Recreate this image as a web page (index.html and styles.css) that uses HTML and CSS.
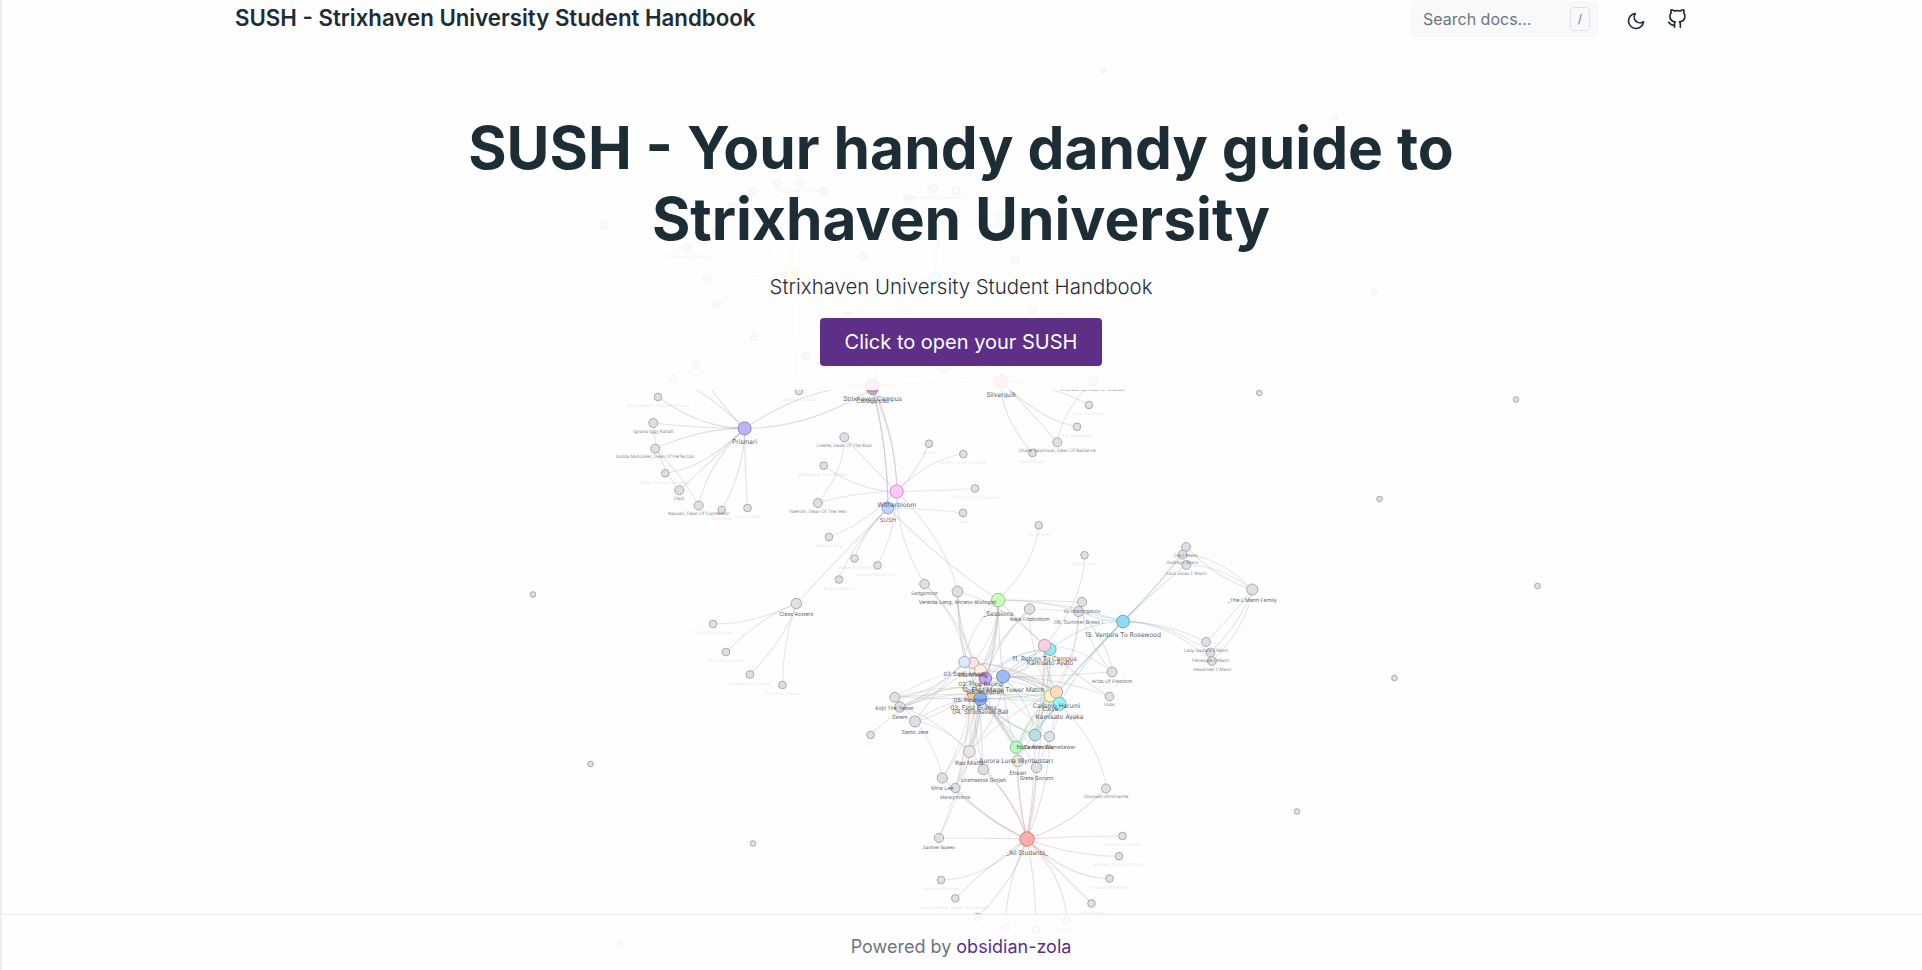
FILE: index.html
```html
<!DOCTYPE html>
<html lang="en">
<head>
<meta charset="utf-8">
<title>SUSH - Strixhaven University Student Handbook</title>
<link rel="stylesheet" href="styles.css">
</head>
<body>
<svg class="graph" id="graph" width="1922" height="970" viewBox="0 0 1922 970" aria-hidden="true"></svg>
<div class="page">
  <div class="top">
    <header class="navbar">
      <a class="brand">SUSH - Strixhaven University Student Handbook</a>
      <div class="tools">
        <div class="search"><span>Search docs...</span><kbd>/</kbd></div>
        <svg class="icon moon" viewBox="0 0 24 24"><path d="M21 12.79A9 9 0 1 1 11.21 3 7 7 0 0 0 21 12.79z"/></svg>
        <svg class="icon" viewBox="0 0 24 24"><path d="M9 19c-5 1.5-5-2.5-7-3m14 6v-3.87a3.37 3.37 0 0 0-.94-2.61c3.14-.35 6.44-1.54 6.44-7A5.44 5.44 0 0 0 20 4.77 5.07 5.07 0 0 0 19.91 1S18.73.65 16 2.48a13.38 13.38 0 0 0-7 0C6.27.65 5.09 1 5.09 1A5.07 5.07 0 0 0 5 4.77a5.44 5.44 0 0 0-1.5 3.78c0 5.42 3.3 6.61 6.44 7A3.37 3.37 0 0 0 9 18.13V22"/></svg>
      </div>
    </header>
    <main class="hero">
      <h1>SUSH - Your handy dandy guide to<br>Strixhaven University</h1>
      <p class="lead">Strixhaven University Student Handbook</p>
      <a class="button">Click to open your SUSH</a>
    </main>
  </div>
  <footer class="footer">Powered by&nbsp;<a>obsidian-zola</a></footer>
</div>
<script src="graph.js"></script>
</body>
</html>
```
FILE: styles.css
```css
* { box-sizing: border-box; }
body { margin: 0; background: #fefefe; color: #1d2d35; font-family: Inter, sans-serif; }
.page { position: relative; height: 970px; display: flex; flex-direction: column; justify-content: space-between; border-left: 2px solid #eeeeef; overflow: hidden; }
.graph { position: absolute; left: 0; top: 0; }
.top { height: 390px; padding-right: 2px; background: rgba(254,254,254,.86); }
.navbar { height: 37px; padding: 1px 233px 0 233px; display: flex; justify-content: space-between; align-items: flex-start; }
.brand { font-size: 22.25px; font-weight: 600; line-height: 34px; white-space: nowrap; }
.tools { display: flex; align-items: center; }
.search { width: 188px; height: 36px; padding: 0 9px 0 12px; margin-right: 27px; border-radius: 4px; background: #f8f9fa; color: #6c757d; font-size: 16px; display: flex; align-items: center; justify-content: space-between; }
kbd { width: 20px; height: 24px; border: 1px solid #dee2e6; border-radius: 4px; font: 12px/22px Inter, sans-serif; text-align: center; }
.icon { width: 20px; height: 20px; fill: none; stroke: #1d2d35; stroke-width: 2; stroke-linecap: round; stroke-linejoin: round; }
.moon { margin-right: 21px; margin-top: 3px; }
.hero { padding-top: 75px; display: flex; flex-direction: column; align-items: center; }
h1 { margin: 0; font-size: 58.65px; font-weight: 700; line-height: 71px; text-align: center; white-space: nowrap; }
.lead { margin: 17px 0 15px; font-size: 20.4px; font-weight: 300; line-height: 32px; }
.button { width: 282px; height: 48px; border-radius: 4px; background: #5d2f86; color: #fff; font-size: 20px; line-height: 48px; text-align: center; }
.footer { height: 56px; padding: 8px 2px 0 0; border-top: 1px solid #e9ecef; background: rgba(254,254,254,.86); display: flex; justify-content: center; align-items: center; font-size: 18px; color: #6c757d; }
.footer a { color: #5d2f86; }
.graph text { font-family: Inter, sans-serif; text-anchor: middle; dominant-baseline: central; fill: #343434; text-rendering: geometricPrecision; }
.graph path { fill: none; stroke-width: 1.1; }
```
FILE: graph.js
```js
const G = '#dde1e6';
const nodes = {}, order = [];
// id, x, y, radius, fill, label, optional label opacity
function n(id, x, y, r, fill, label, op) { nodes[id] = { x, y, r, fill: fill || G, label, op }; order.push(nodes[id]); }
const links = [];
// connect every source id to every target id
function e(from, to) { from.split(' ').forEach(a => to.split(' ').forEach(b => links.push([a, b]))); }

[[1259.3,393],[1516,399.5],[1379.5,499],[1537.5,586],[1394.5,678],[1297,811.5],[533,594.5],[590.5,764],[753,843.5],[1103.5,71],[1335,117.5],[1374,292],[620,944]].forEach((p, i) => n('iso' + i, p[0], p[1], 2.8, G, ''));

n('lor', 791.5, 274.5, 6.5, '#ffff9e', 'Lorehold');
n('l1', 604.7, 225, 3.8, G, 'Quintorius Kand');
n('l2', 686.7, 248, 4.4, G, 'Lianna Flametongue', .55);
n('l3', 706.5, 279, 3.8, G, 'Fortress');
n('l4', 716.5, 304.7, 3.8, G, 'Kollema Hall');
n('l5', 754, 337, 3.8, G, 'Pillardrop Grounds');
n('l6', 716, 233, 3.8, G, 'Dig Site');
n('l7', 732.5, 207, 4.4, G, 'Augusta, Dean Of Order', .5);
n('l8', 753, 191.5, 3.8, G, 'Asterion');
n('l9', 777, 183, 3.8, G, '');
n('l10', 800, 182.7, 4.5, G, 'Plargg, Dean Of Chaos', .55);
n('l11', 824, 191.5, 3.8, G, 'Reconstructor');
n('l12', 863, 256.5, 3.8, G, 'Hofri Ghost');
n('qua', 935, 279, 6.5, '#9efff0', '');
n('q1', 932.5, 189, 4.5, G, 'Kianne, Dean Of Substance', .55);
n('q2', 956, 190.5, 3.8, G, '');
n('q3', 909.5, 198.5, 3.8, G, '');
n('q4', 999.5, 215.3, 4.5, G, 'Imbraham, Dean Of Theory', .45);
n('q5', 1015, 236, 3.8, G, 'Torus Hall');
n('q6', 1015, 260.7, 3.8, G, 'Zimone');
n('q7', 848, 316, 3.8, G, '');
n('s1', 1032.5, 310, 3.8, G, 'Scrollhall');
n('s2', 1059.5, 316.5, 3.8, G, '');
n('s3', 944, 369, 3.8, G, 'Mavinda Sharpbeak');
n('p1', 696, 364.5, 3.8, G, 'Furygale');
n('p2', 673, 378, 3.8, G, 'Rootha, Mercurial Artist');
n('c1', 805.5, 356, 3.8, G, 'Sunken Bowl');
n('lc', 799, 391, 3.8, G, 'Lorehold Campus');

n('arl', 658, 397, 3.8, G, 'Arlin Mensorn, Poppy Instructor');
n('ign', 653.3, 423, 4.5, G, 'Ignaria Iggy Kahafi');
n('uvi', 655.2, 448.7, 4.5, G, 'Uvilda Mistcoiler, Dean Of Perfection');
n('zaf', 665.2, 473.3, 3.8, G, 'Zaffai, Thunder Conductor');
n('zep', 679.3, 490.3, 4.5, G, 'Zeph');
n('nas', 698.7, 505.5, 4.5, G, 'Nassari, Dean Of Expression');
n('opu', 721.7, 510, 3.8, G, 'Opus Walk');
n('con', 747.5, 508, 3.8, G, 'Conjurot Hall');
n('pri', 744.6, 428.4, 6.5, '#bdb2ff', 'Prismari');

n('col', 872.5, 389, 5.6, '#c4b4bc', 'College List');
n('cam', 872.5, 385.3, 6.5, '#f5a5e0', 'Strixhaven Campus');
n('sil', 1001, 381.5, 6.5, '#ffadad', 'Silverquill');
n('emb', 1092.5, 381.3, 4.4, G, 'Embrose Lu, Dean Of Shadow');
n('pam', 1089, 405, 3.8, G, 'Pam, The Broker');
n('dra', 1077, 426.7, 3.8, G, 'The Dramarium');
n('sha', 1057.3, 442.3, 4.5, G, 'Shaile Talonrook, Dean Of Radiance');
n('dun', 1032.5, 453, 3.8, G, 'Dunsklift Hall');

n('lis', 844.3, 437.3, 4.5, G, 'Lisette, Dean Of The Root');
n('wil', 823.7, 465.7, 3.8, G, 'Willowdusk, Essence Seer');
n('val', 817.8, 503, 4.5, G, 'Valentin, Dean Of The Vein');
n('det', 829, 537, 3.8, G, 'Detention Bog');
n('wid', 854.5, 558.5, 3.8, G, 'Widdershins Hall');
n('dyo', 877.5, 565.5, 3.8, G, 'Dyome, Master Chef');
n('ext', 839, 579.5, 3.8, G, 'Extracurriculars');
n('qrn', 929, 443.7, 3.8, G, 'Quarns');
n('ver', 963.3, 454, 3.8, G, 'Verdira, Grass Gardener');
n('thr', 975, 488.5, 3.8, G, 'Thrash, Ghost Swimmer');
n('jub', 963, 513, 3.8, G, 'Jubo');
n('sus', 888, 508, 5.9, '#c4d4ff', 'SUSH', .72);
n('wit', 896.7, 491.5, 6.5, '#ffc6ff', 'Witherbloom');

n('cla', 796.3, 603.5, 5.2, G, 'Class Rosters');
n('y4', 713, 624, 3.8, G, 'Fourth Year Classes');
n('y3', 726, 652, 3.8, G, 'Third Year Classes');
n('y2', 750, 674.5, 3.8, G, 'Second Year Classes');
n('y1', 782.5, 685, 3.8, G, 'First Year Classes');
n('fes', 1038.7, 525.3, 3.8, G, 'SS. Festival');
n('mag', 1084.5, 555.2, 3.8, G, 'Mage Tower');
n('sed', 924.5, 584, 4.7, G, 'Sedgemoor', .72);
n('vrl', 957.5, 591.5, 5.4, G, 'Verelda Lang, Arcano-Biologist');
n('ses', 998.3, 600, 6.7, '#caffbf', '_Sessions');
n('ala', 1029.5, 609, 5.2, G, 'Alaia Fitzbottom');
n('s09', 1078.5, 611.5, 5, G, '09. Summer Break I', .65);
n('s10', 1082, 602, 4.7, G, '10. Interrogation', .7);
n('s13', 1123, 621.5, 6.4, '#90dbf4', '13. Venture To Rosewood');
n('dal', 1186, 547, 4.4, G, "Dal L'Mann");
n('aud', 1182.5, 554.7, 4.4, G, "Audrey L'Mann");
n('jul', 1186.3, 565, 4.4, G, "Lord Julian L'Mann");
n('fam', 1252.3, 589.5, 5.5, G, "_The L'Mann Family");
n('isa', 1206, 642, 4.4, G, "Lady Isadora L'Mann");
n('alx', 1212, 661, 4.4, G, "Alexander L'Mann");
n('pen', 1210.5, 652.5, 4.4, G, "Penelope L'Mann");

n('ayt', 1050, 649.3, 6.1, '#8eecf5', 'Kamisato Ayato');
n('s11', 1044.5, 645.5, 6.1, '#fbd0e0', '11. Return To Campus');
n('s06', 973, 663, 5.7, '#fde2e4', '06. Mining');
n('s07', 964.5, 662, 5.7, '#dfe7fd', '07. Sedgemoor');
n('s02', 980.5, 670.5, 6, '#fff1e6', '02. Frog Racing');
n('s08', 985.5, 678.3, 6.2, '#c3a7ed', '08. Initiation');
n('s12', 1003, 676.5, 6.5, '#9dbcf3', '12. First Mage Tower Match');
n('s03', 973.5, 694, 6.2, '#ffc98a', '03. First Exams');
n('s05', 970, 687, 6, '#eeeeea', '05. Reunion');
n('s04', 980.3, 698.8, 6.5, '#8fb3fb', '04. Strixhaven Ball');
n('cai', 1050.3, 696, 6, '#fdf8c0', 'Caiya');
n('har', 1056.5, 692, 6.1, '#ffdbc4', 'Calismo Harumi');
n('ayk', 1059.5, 703.8, 6.5, '#98f5ff', 'Kamisato Ayaka');
n('ari', 1112, 672, 4.9, G, 'Ariza Of Freedom', .7);
n('vid', 1109.5, 696.5, 4.4, G, 'Vidar');
n('koj', 894.7, 697.3, 5, G, 'Kojii The Tamer');
n('sal', 900, 707, 5.2, G, 'Salem');
n('sam', 915, 721.5, 5.5, G, 'Samo Jere');
n('tx', 870.5, 735, 3.8, G, 'TX');
n('cad', 1049.5, 736.5, 5.1, G, 'Cadoras Damellawar');
n('nor', 1035, 735, 5.9, '#badfe3', 'Nora Ann Wu');
n('aur', 1016.3, 747.3, 6.1, '#b9fbc0', 'Aurora Luna Wynterstarr');
n('ehs', 1017.8, 761, 5.7, '#e2ece9', 'Ehsan');
n('gre', 1036.5, 767.5, 5.2, G, 'Greta Gorunn');
n('rae', 969.3, 751.5, 5.9, '#ebe4ea', 'Rae Mistle');
n('urz', 983.5, 769.5, 5.2, G, 'Urzmaktok Grojah');
n('min', 942.3, 778, 5.1, G, 'Mina Lee', .7);
n('mel', 955.3, 788, 4.7, G, 'Melwythorne', .7);
n('shu', 1106, 788.5, 4.5, G, 'Shuvadri Glintmantle');
n('zan', 939, 838, 4.6, G, 'Zanther Bowen');
n('a1', 941, 880, 3.8, G, 'Jasmeen Binsklaw');
n('a2', 955.3, 898.3, 3.8, G, 'Rosimyffenbip "Rosie" Wuzfeddlims');
n('a3', 977.5, 917, 3.8, G, 'Cadogan T. Wilford');
n('a4', 1005.5, 928.3, 3.8, G, 'Tilana Kapule');
n('a5', 1036, 930, 3.8, G, 'Quentillius');
n('a6', 1066.5, 921, 3.8, G, 'Javenesh Stoutclaw');
n('a7', 1091.5, 903.5, 3.8, G, 'Larine Arneau');
n('a8', 1109.5, 878.5, 3.8, G, 'Grayson Wildemere');
n('a9', 1119, 856.2, 3.8, G, 'Bhedum "Rampart" Sooqij');
n('a10', 1122.5, 836, 3.8, G, 'Drazhomir Yarnask');
n('all', 1027, 839, 7.2, '#ffadad', '_All Students_');

e('lor', 'l1 l2 l3 l4 l5 l6 l7 l8 l9 l10 l11 l12 cam lc');
e('l7', 'l10'); e('q1', 'q4');
e('qua', 'q1 q2 q3 q4 q5 q6 q7 cam c1');
e('sil', 's1 s2 s3 emb pam dra sha dun cam'); e('emb', 'sha');
e('pri', 'arl ign uvi zaf zep nas opu con p1 p2 col'); e('cam', 'pri lc');
e('ign', 'zep'); e('uvi', 'nas');
e('wit', 'lis wil val det dyo qrn ver thr sed vrl cam col'); e('lis', 'val');
e('sus', 'jub wid ext cla cam col ses');
e('y4 y3 y2 y1', 'cla');
e('ses', 'fes s10 s09 s13 s11 s02 s03 s04 s05 s06 s07 s08 s12');
e('mag', 's11');
e('s13', 'dal aud jul isa pen alx ayt ayk har s09 aur');
e('dal aud jul isa pen alx', 'fam');
e('vrl', 's07 s06 s02 s04'); e('sed', 's07 s06'); e('ala', 's13 s08 s05 cai');
e('s09', 'ari cai har'); e('s10', 'ari');
e('s11', 'ari vid ayk cai har nor vrl s12 all'); e('ayt', 's12 s08 s05 cai nor');
e('s12', 'ari vid ayk har ayt aur nor rae s04');
e('s07', 'koj sal sam har'); e('s06', 'har sal cai');
e('s05', 'koj sal tx rae ayk'); e('s08', 'sam cai aur');
e('s04', 'sam ayk koj har rae nor aur cad gre urz ehs mel');
e('s03', 'koj sal cai ayk rae urz aur'); e('s02', 'koj cai har rae cad');
e('rae', 'sam sal har'); e('ayk', 'nor aur cad ehs shu'); e('cai', 'aur nor ehs'); e('har', 'gre aur');
e('koj', 'min'); e('s05 s02', 'min mel zan');
e('min mel urz rae ehs gre nor cad aur shu zan a1 a2 a3 a4 a5 a6 a7 a8 a9 a10', 'all');

// darken a hex colour for outlines and connecting lines
function dark(hex, f) { return '#' + [1, 3, 5].map(i => Math.round(parseInt(hex.substr(i, 2), 16) * f).toString(16).padStart(2, '0')).join(''); }
let defs = '', lines = '', dots = '', labels = '';
links.forEach(([a, b], i) => {
  const p = nodes[a], q = nodes[b];
  const dx = Math.abs(p.x - q.x), dy = Math.abs(p.y - q.y), s = Math.max(dx, dy) / 2;
  let vx = p.x + s * Math.sign(q.x - p.x), vy = p.y + s * Math.sign(q.y - p.y);
  if (dx <= dy) { if (dx < s) vx = p.x; } else if (dy < s) vy = p.y;
  defs += `<linearGradient id="g${i}" gradientUnits="userSpaceOnUse" x1="${p.x}" y1="${p.y}" x2="${q.x}" y2="${q.y + .01}"><stop stop-color="${dark(p.fill, .8)}"/><stop offset="1" stop-color="${dark(q.fill, .8)}"/></linearGradient>`;
  lines += `<path d="M${p.x} ${p.y}Q${vx} ${vy} ${q.x} ${q.y}" stroke="url(#g${i})" opacity=".33"/>`;
});
order.forEach(o => {
  dots += `<circle cx="${o.x}" cy="${o.y}" r="${o.r}" fill="${o.fill}" stroke="${dark(o.fill, .75)}"/>`;
  if (!o.label) return;
  const r = o.r;
  const size = r < 4 ? 4.1 : r < 4.7 ? 4.55 : r < 5 ? 4.9 : r < 5.6 ? 5.3 : r < 6.05 ? 5.9 : 6.4;
  const off = r < 4 ? 8.7 : r < 4.6 ? 9.2 : r < 5 ? 10.2 : r < 5.6 ? 11.3 : r < 6 ? 12.3 : 13.5;
  const op = o.op || (r < 4 ? .13 : r < 4.6 ? .6 : .78);
  labels += `<text x="${o.x}" y="${o.y + off}" font-size="${size}" opacity="${op}">${o.label}</text>`;
});
document.getElementById('graph').innerHTML = `<defs>${defs}</defs>${lines}${dots}${labels}`;
```
